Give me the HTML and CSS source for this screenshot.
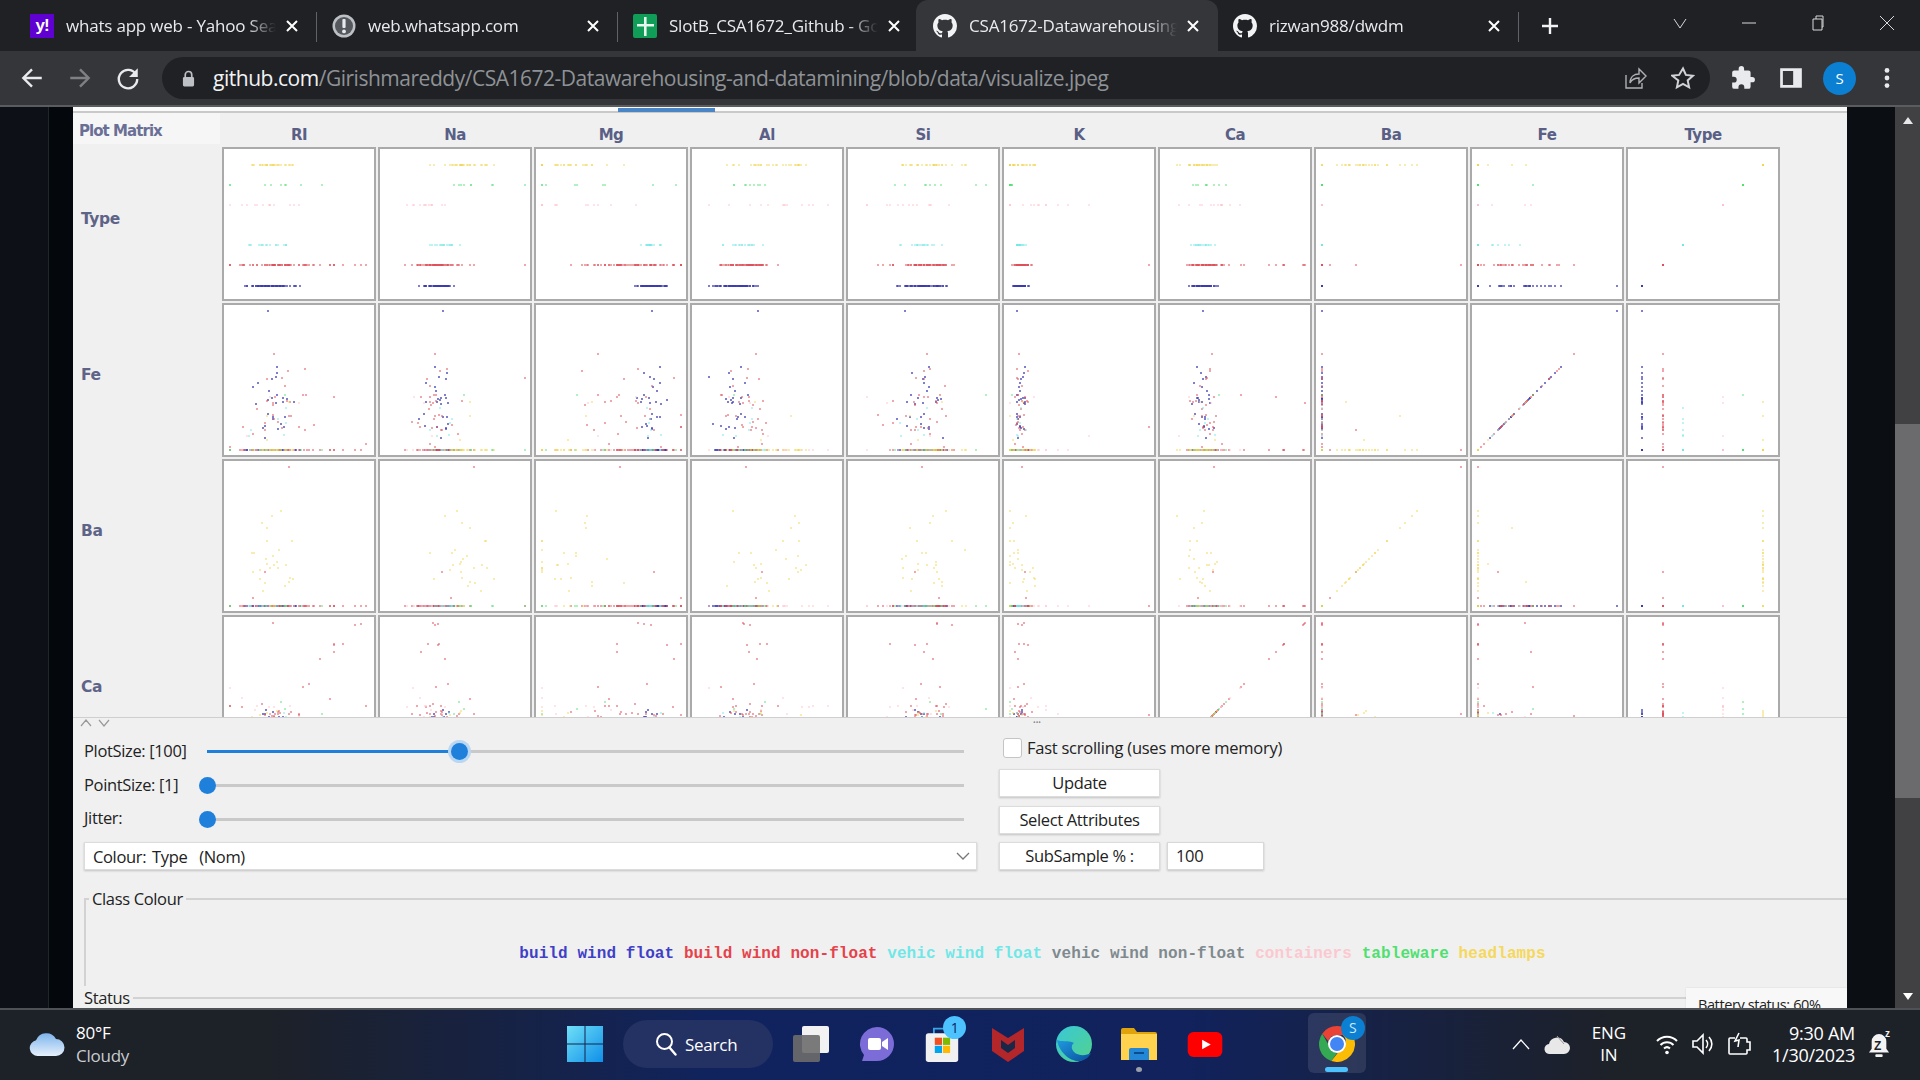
FILE: index.html
```html
<!DOCTYPE html>
<html lang="en">
<head>
<meta charset="utf-8">
<title>visualize.jpeg</title>
<link rel="stylesheet" href="styles.css">
</head>
<body>
<div class="tabbar">
  <div class="tab first">
    <span class="fav yahoo">y!</span><span class="tab-title">whats app web - Yahoo Search Results</span>
    <svg class="tab-x" viewBox="0 0 14 14"><path d="M2 2l10 10M12 2L2 12"/></svg>
  </div>
  <div class="tab">
    <svg class="fav" viewBox="0 0 24 24"><circle cx="12" cy="12" r="11.5" fill="#bdc1c6"/><circle cx="12" cy="12" r="9" fill="#55585c"/><rect x="10.4" y="5" width="3.2" height="9" rx="1" fill="#e8eaed"/><circle cx="12" cy="17.4" r="1.9" fill="#e8eaed"/></svg>
    <span class="tab-title">web.whatsapp.com</span>
    <svg class="tab-x" viewBox="0 0 14 14"><path d="M2 2l10 10M12 2L2 12"/></svg>
  </div>
  <div class="tab no-sep">
    <svg class="fav" viewBox="0 0 24 24"><rect width="24" height="24" rx="2" fill="#0f9d58"/><path d="M11 3h2.6v7H21v2.6h-7.4V22H11v-9.4H4V10h7z" fill="#e8f5ee"/></svg>
    <span class="tab-title">SlotB_CSA1672_Github - Google Sheets</span>
    <svg class="tab-x" viewBox="0 0 14 14"><path d="M2 2l10 10M12 2L2 12"/></svg>
  </div>
  <div class="tab active">
    <svg class="fav" viewBox="0 0 16 16"><path class="gh" d="M8 0C3.58 0 0 3.58 0 8c0 3.54 2.29 6.53 5.47 7.59.4.07.55-.17.55-.38 0-.19-.01-.82-.01-1.49-2.01.37-2.53-.49-2.69-.94-.09-.23-.48-.94-.82-1.13-.28-.15-.68-.52-.01-.53.63-.01 1.08.58 1.23.82.72 1.21 1.87.87 2.33.66.07-.52.28-.87.51-1.07-1.78-.2-3.64-.89-3.64-3.95 0-.87.31-1.59.82-2.15-.08-.2-.36-1.02.08-2.12 0 0 .67-.21 2.2.82.64-.18 1.32-.27 2-.27.68 0 1.36.09 2 .27 1.53-1.04 2.2-.82 2.2-.82.44 1.1.16 1.92.08 2.12.51.56.82 1.27.82 2.15 0 3.07-1.87 3.75-3.65 3.95.29.25.54.73.54 1.48 0 1.07-.01 1.93-.01 2.2 0 .21.15.46.55.38A8.013 8.013 0 0016 8c0-4.42-3.58-8-8-8z"/></svg>
    <span class="tab-title">CSA1672-Datawarehousing-and-datamining</span>
    <svg class="tab-x" viewBox="0 0 14 14"><path d="M2 2l10 10M12 2L2 12"/></svg>
  </div>
  <div class="tab">
    <svg class="fav" viewBox="0 0 16 16"><path class="gh" d="M8 0C3.58 0 0 3.58 0 8c0 3.54 2.29 6.53 5.47 7.59.4.07.55-.17.55-.38 0-.19-.01-.82-.01-1.49-2.01.37-2.53-.49-2.69-.94-.09-.23-.48-.94-.82-1.13-.28-.15-.68-.52-.01-.53.63-.01 1.08.58 1.23.82.72 1.21 1.87.87 2.33.66.07-.52.28-.87.51-1.07-1.78-.2-3.64-.89-3.64-3.95 0-.87.31-1.59.82-2.15-.08-.2-.36-1.02.08-2.12 0 0 .67-.21 2.2.82.64-.18 1.32-.27 2-.27.68 0 1.36.09 2 .27 1.53-1.04 2.2-.82 2.2-.82.44 1.1.16 1.92.08 2.12.51.56.82 1.27.82 2.15 0 3.07-1.87 3.75-3.65 3.95.29.25.54.73.54 1.48 0 1.07-.01 1.93-.01 2.2 0 .21.15.46.55.38A8.013 8.013 0 0016 8c0-4.42-3.58-8-8-8z"/></svg>
    <span class="tab-title">rizwan988/dwdm</span>
    <svg class="tab-x" viewBox="0 0 14 14"><path d="M2 2l10 10M12 2L2 12"/></svg>
  </div>
  <svg class="new-tab" viewBox="0 0 18 18"><path d="M9 1v16M1 9h16"/></svg>
  <div class="win-controls">
    <svg viewBox="0 0 16 16"><path d="M2 4l6 9 6-9"/></svg>
    <svg viewBox="0 0 16 16"><path d="M1 8h14"/></svg>
    <svg viewBox="0 0 16 16"><path d="M3 4h9v11H3zM6 4V1h7v11h-1"/></svg>
    <svg viewBox="0 0 16 16"><path d="M1 1l14 14M15 1L1 15"/></svg>
  </div>
</div>

<div class="toolbar">
  <div class="nav-btn"><svg viewBox="0 0 24 24"><path class="ic" d="M21 12H4M12 4l-8 8 8 8"/></svg></div>
  <div class="nav-btn dim"><svg viewBox="0 0 24 24"><path class="ic" d="M3 12h17M12 4l8 8-8 8"/></svg></div>
  <div class="nav-btn"><svg viewBox="0 0 24 24"><path class="ic" d="M19.5 9A8.5 8.5 0 1 0 20.5 13"/><path class="ic-fill" d="M21 3v8h-8z"/></svg></div>
  <div class="omnibox">
    <svg class="lock" viewBox="0 0 14 18"><path d="M3.5 8V5a3.5 3.5 0 0 1 7 0v3" fill="none" stroke="#bdc1c6" stroke-width="1.8"/><rect x="1" y="7.5" width="12" height="10" rx="1.5" fill="#bdc1c6"/></svg>
    <div class="url"><span class="host">github.com</span>/Girishmareddy/CSA1672-Datawarehousing-and-datamining/blob/data/visualize.jpeg</div>
    <svg class="omni-ic" viewBox="0 0 24 24"><path class="thin" d="M3 9v13h16v-5M7 17c0-6 4-9 9-9V3l7 7-7 7v-5c-4 0-7 1-9 5z"/></svg>
    <svg class="omni-ic" viewBox="0 0 24 24"><path class="thin2" d="M12 2.5l2.9 6.4 7 .8-5.2 4.7 1.4 6.9-6.100-3.500-6.100 3.500 1.400-6.900L1.100 9.700l7-.8z"/></svg>
  </div>
  <div class="tool-ic puzzle"><svg viewBox="0 0 24 24"><path d="M20.500 11H19V7a2 2 0 0 0-2-2h-4V3.500a2.500 2.500 0 0 0-5 0V5H4a2 2 0 0 0-2 2v3.800h1.500a2.700 2.700 0 0 1 0 5.400H2V20a2 2 0 0 0 2 2h3.800v-1.500a2.700 2.700 0 0 1 5.400 0V22H17a2 2 0 0 0 2-2v-4h1.500a2.500 2.500 0 0 0 0-5z" fill="#e8eaed"/></svg></div>
  <div class="tool-ic panel-ic"><svg viewBox="0 0 24 24"><path fill-rule="evenodd" d="M2 3h20v18H2zM4.500 5.500v13H14v-13z" fill="#e8eaed"/></svg></div>
  <div class="avatar">S</div>
  <div class="tool-ic"><svg viewBox="0 0 24 24"><circle cx="12" cy="5" r="2.200" fill="#e8eaed"/><circle cx="12" cy="12" r="2.200" fill="#e8eaed"/><circle cx="12" cy="19" r="2.200" fill="#e8eaed"/></svg></div>
</div>

<main class="content">
  <div class="gutter-left"></div>
  <div class="shot">
    <div class="tabline"><span class="tabline-active"></span></div>
    <section class="matrix-area">
      <div class="matrix" id="matrix">
        <div class="corner">Plot Matrix</div>
        <div class="col-label">RI</div><div class="col-label">Na</div><div class="col-label">Mg</div><div class="col-label">Al</div><div class="col-label">Si</div><div class="col-label">K</div><div class="col-label">Ca</div><div class="col-label">Ba</div><div class="col-label">Fe</div><div class="col-label">Type</div>
      </div>
    </section>
    <section class="panel">
      <div class="grips"><span class="arrows">
        <svg viewBox="0 0 32 8"><path d="M1 7l5-6 5 6M19 1l5 6 5-6"/></svg></span><span class="dots">•••</span></div>
      <div class="controls">
        <div class="left-col">
          <div class="slider-row"><label>PlotSize: [100]</label><div class="slider"><div class="fill" style="width:33.300%"></div><div class="thumb halo" style="left:33.300%"></div></div></div>
          <div class="slider-row"><label>PointSize: [1]</label><div class="slider"><div class="thumb"></div></div></div>
          <div class="slider-row"><label>Jitter:</label><div class="slider"><div class="thumb"></div></div></div>
          <div class="combo"><span>Colour: Type  (Nom)</span><svg viewBox="0 0 14 8"><path d="M1 1l6 6 6-6"/></svg></div>
        </div>
        <div class="right-col">
          <div class="check-row"><span class="check"></span><span class="check-text">Fast scrolling (uses more memory)</span></div>
          <div class="btn">Update</div>
          <div class="btn">Select Attributes</div>
          <div class="sub-row"><div class="btn">SubSample % :</div><div class="input">100</div></div>
        </div>
      </div>
      <fieldset class="group class-colour">
        <legend>Class Colour</legend>
        <div class="legend-line"><span class="c1">build wind float</span> <span class="c2">build wind non-float</span> <span class="c3">vehic wind float</span> <span class="c4">vehic wind non-float</span> <span class="c5">containers</span> <span class="c6">tableware</span> <span class="c7">headlamps</span></div>
      </fieldset>
      <fieldset class="group status"><legend>Status</legend></fieldset>
      <div class="toast">Battery status: 60%</div>
    </section>
  </div>
  <div class="gutter-right"></div>
  <div class="scrollbar">
    <span class="arrow-up"></span>
    <span class="sb-thumb"></span>
    <span class="arrow-down"></span>
  </div>
</main>

<footer class="taskbar">
  <div class="weather">
    <svg class="cloud" viewBox="0 0 36 24"><defs><linearGradient id="cl" x1="0" y1="0" x2="0" y2="1"><stop offset="0" stop-color="#7db4ec"/><stop offset="1" stop-color="#e6f0fb"/></linearGradient></defs><path d="M9 24a8 8 0 0 1-2-15.800A11 11 0 0 1 27 7a8.500 8.500 0 0 1 0 17z" fill="url(#cl)"/></svg>
    <div class="weather-text"><span class="temp">80°F</span><span class="cond">Cloudy</span></div>
  </div>
  <svg class="win-logo" viewBox="0 0 36 36"><defs><linearGradient id="w1" x1="0" y1="0" x2="1" y2="1"><stop offset="0" stop-color="#6fe0f7"/><stop offset="1" stop-color="#0f8fe8"/></linearGradient></defs><path d="M0 0h17.500v17.500H0zM18.500 0H36v17.500H18.500zM0 18.500h17.500V36H0zM18.500 18.500H36V36H18.500z" fill="url(#w1)"/></svg>
  <div class="search-pill">
    <svg viewBox="0 0 22 24"><circle cx="9.500" cy="9.500" r="7.500" fill="none" stroke="#fff" stroke-width="2"/><path d="M14.500 15.500l6 7" stroke="#fff" stroke-width="2.400" stroke-linecap="round"/></svg>
    <span>Search</span>
  </div>
  <div class="apps">
    <svg class="app" viewBox="0 0 36 36"><rect x="9" y="0" width="27" height="27" rx="2" fill="#f2f2f2"/><rect x="0" y="9" width="27" height="27" rx="2" fill="#6d6d6d" fill-opacity=".9"/></svg>
    <svg class="app" viewBox="0 0 36 36"><path d="M18 1a17 17 0 0 1 0 34H3l2-6A17 17 0 0 1 18 1z" fill="#7b6cd8"/><rect x="9" y="12" width="13" height="12" rx="2" fill="#fff"/><path d="M23 16l6-4v12l-6-4z" fill="#fff"/></svg>
    <div class="store-wrap">
      <svg class="app" viewBox="0 0 36 40"><path d="M9 10V3h18v7" fill="none" stroke="#37a6e8" stroke-width="2"/><rect x="0" y="8" width="36" height="32" rx="3" fill="#f1f1f1"/><rect x="10" y="13" width="8" height="8" fill="#f25022"/><rect x="19" y="13" width="8" height="8" fill="#7fba00"/><rect x="10" y="22" width="8" height="8" fill="#00a4ef"/><rect x="19" y="22" width="8" height="8" fill="#ffb900"/></svg>
      <span class="badge">1</span>
    </div>
    <svg class="app" viewBox="0 0 36 36"><path d="M2 2l16 10L34 2v23L18 36 2 25z" fill="#b3262a"/><path d="M11 14l7 5 7-5v8l-7 5-7-5z" fill="#1a2748"/></svg>
    <svg class="app" viewBox="0 0 36 36"><defs><linearGradient id="e1" x1="0" y1="0" x2="1" y2="1"><stop offset="0" stop-color="#39c8d8"/><stop offset="1" stop-color="#52d28c"/></linearGradient><linearGradient id="e2" x1="0" y1="0" x2="1" y2="1"><stop offset="0" stop-color="#1f9be0"/><stop offset="1" stop-color="#0a4f9e"/></linearGradient></defs><circle cx="18" cy="18" r="18" fill="url(#e1)"/><path d="M1 14C3 26 14 36 24 35c6-1 9-4 11-8-5 3-13 3-17-1-3-3-3-7 0-9-6-3-13-1-17-3z" fill="url(#e2)"/></svg>
    <div class="explorer-wrap">
      <svg class="app" viewBox="0 0 36 32"><path d="M0 2a2 2 0 0 1 2-2h11l3 4h18a2 2 0 0 1 2 2v4H0z" fill="#e0a30b"/><rect x="0" y="6" width="36" height="26" fill="#ffd34e"/><path d="M10 20h16a2 2 0 0 1 2 2v10H8V22a2 2 0 0 1 2-2z" fill="#2187d6"/><rect x="13" y="24" width="10" height="2" fill="#0b4d8c"/></svg>
      <span class="open-dot"></span>
    </div>
    <svg class="app yt" viewBox="0 0 36 26"><rect width="36" height="26" rx="6" fill="#f00"/><path d="M15 8l9 5-9 5z" fill="#fff"/></svg>
    <div class="chrome-slot">
      <div class="chrome-wrap">
        <svg class="app" viewBox="0 0 36 36"><path d="M18 0a18 18 0 0 1 15.600 9H18a9 9 0 0 0-8.600 6.300L3.200 7.700A18 18 0 0 1 18 0z" fill="#ea4335"/><path d="M3.200 7.700l7.800 13.500a9 9 0 0 0 7 5.800l-5.600 8.100A18 18 0 0 1 3.200 7.700z" fill="#34a853"/><path d="M33.600 9A18 18 0 0 1 12.400 35.100L21 24a9 9 0 0 0 3-15z" fill="#fbbc05"/><circle cx="18" cy="18" r="9" fill="#fff"/><circle cx="18" cy="18" r="7" fill="#4285f4"/></svg>
        <span class="chrome-badge">S</span>
      </div>
      <span class="active-bar"></span>
    </div>
  </div>
  <div class="tray">
    <svg class="t-caret" viewBox="0 0 20 12"><path d="M2 11l8-9 8 9"/></svg>
    <svg class="t-cloud" viewBox="0 0 26 22"><path d="M6 21a5 5 0 0 1-1-10A8 8 0 0 1 20 9a6 6 0 0 1 0 12z" fill="#e8e8e8"/><path d="M13 3l7 8" stroke="#999" stroke-width="1"/></svg>
    <div class="t-lang"><span>ENG</span><span>IN</span></div>
    <svg class="t-ic" viewBox="0 0 24 24"><path d="M2 9a14 14 0 0 1 20 0M5.500 13a9 9 0 0 1 13 0M9 16.500a4.500 4.500 0 0 1 6 0" fill="none" stroke="#fff" stroke-width="2"/><circle cx="12" cy="20.500" r="1.800" fill="#fff"/></svg>
    <svg class="t-ic" viewBox="0 0 24 24"><path d="M2 9h4l6-6v18l-6-6H2z" fill="none" stroke="#fff" stroke-width="1.600"/><path d="M15 8a6 6 0 0 1 0 8M18 5a10 10 0 0 1 0 14" fill="none" stroke="#fff" stroke-width="1.600"/></svg>
    <svg class="t-ic" viewBox="0 0 24 24"><path d="M8 6H3a1 1 0 0 0-1 1v14a1 1 0 0 0 1 1h16a1 1 0 0 0 1-1v-3h3v-8h-3V7a1 1 0 0 0-1-1h-6" fill="none" stroke="#fff" stroke-width="1.600"/><path d="M12 1L8 9l4-1-1 7" fill="none" stroke="#fff" stroke-width="1.600"/></svg>
    <div class="clock"><span>9:30 AM</span><span>1/30/2023</span></div>
    <div class="bell-wrap">
      <svg class="bell" viewBox="0 0 24 28"><path d="M12 1a8 8 0 0 1 8 8v8l3 4H1l3-4V9a8 8 0 0 1 8-8z" fill="#f3f3f3"/><rect x="8" y="23" width="8" height="3" rx="1" fill="#f3f3f3"/></svg>
      <span class="zz">Z</span><span class="zz small">z</span>
    </div>
  </div>
</footer>
<script src="script.js"></script>
</body>
</html>
```
FILE: styles.css
```css
* { box-sizing: border-box; }
html, body { margin: 0; height: 100%; }
body {
  width: 1920px; height: 1080px; overflow: hidden;
  display: flex; flex-direction: column;
  background: #0d1117; color: #fff;
  font-family: "Open Sans", "Noto Sans", sans-serif;
}

/* tab strip */
.tabbar { height: 51px; flex: none; display: flex; align-items: stretch; padding-left: 15px; background: #202124; }
.tab { width: 301px; flex: none; display: flex; align-items: center; padding: 0 15px; position: relative; color: #e8eaed; }
.tab.first { width: 302px; }
.tab::after { content: ""; position: absolute; right: 0; top: 12px; height: 30px; width: 1px; background: #5f6368; }
.tab.no-sep { margin-right: -3px; }
.tab.no-sep::after, .tab.active::after { display: none; }
.tab.active { background: #35363a; border-radius: 12px 12px 0 0; width: 302px; padding-left: 17px; }
.fav { width: 24px; height: 24px; flex: none; }
.gh { fill: #f1f3f4; }
.yahoo { background: #5f01d1; color: #fff; font: 700 17px/24px "Liberation Sans", sans-serif; text-align: center; letter-spacing: -1px; }
.tab-title {
  flex: 1; min-width: 0; margin: 0 9px 0 12px; white-space: nowrap; overflow: hidden;
  font-size: 17px; letter-spacing: -.2px;
  -webkit-mask-image: linear-gradient(90deg, #000 86%, transparent 100%);
  mask-image: linear-gradient(90deg, #000 86%, transparent 100%);
}
.tab-x { width: 14px; height: 14px; flex: none; margin-right: 3px; }
.tab-x path { fill: none; stroke: #fff; stroke-width: 2; }
.new-tab { width: 18px; height: 18px; align-self: center; margin-left: 22px; }
.new-tab path { stroke: #f1f3f4; stroke-width: 2.400; fill: none; }
.win-controls { margin-left: 113px; display: flex; align-items: center; gap: 53px; margin-top: -6px; }
.win-controls svg { width: 16px; height: 16px; }
.win-controls path { fill: none; stroke: #d8d9da; stroke-width: 1; }

/* toolbar */
.toolbar { height: 54px; flex: none; display: flex; align-items: center; padding-left: 8px; background: #35363a; }
.nav-btn { width: 48px; flex: none; display: flex; justify-content: center; }
.nav-btn svg { width: 26px; height: 26px; }
.ic { fill: none; stroke: #e8eaed; stroke-width: 2.200; }
.ic-fill { fill: #e8eaed; }
.dim .ic { stroke: #7d8084; }
.omnibox { width: 1548px; height: 42px; margin-left: 10px; flex: none; display: flex; align-items: center; background: #202124; border-radius: 21px; padding: 0 15px 0 20px; color: #9aa0a6; }
.lock { width: 13px; height: 17px; flex: none; }
.url { flex: 1; margin-left: 18px; font-size: 21px; letter-spacing: -.48px; white-space: nowrap; overflow: hidden; color: #8e9297; }
.host { color: #f1f3f4; }
.omni-ic { width: 24px; height: 26px; flex: none; margin-left: 24px; }
.thin { fill: none; stroke: #aeb1b5; stroke-width: 1.400; }
.thin2 { fill: none; stroke: #d0d2d5; stroke-width: 2; }
.tool-ic { width: 26px; height: 26px; flex: none; margin-left: 22px; }
.puzzle { margin-left: 20px; }
.tool-ic svg { width: 26px; height: 26px; display: block; }
.avatar { width: 33px; height: 33px; flex: none; margin-left: 19px; border-radius: 50%; background: #0b7fd1; color: #fff; font-size: 15px; line-height: 33px; text-align: center; }
.avatar + .tool-ic { margin-left: 18px; }

/* page */
.content { flex: 1; min-height: 0; display: flex; border-top: 2px solid #5b5c5e; }
.gutter-left { width: 73px; flex: none; background: linear-gradient(90deg, #0d1117 48px, #21262d 48px, #21262d 49px, #04070c 49px); }
.gutter-right { width: 48px; flex: none; background: #0b0e13; }
.shot { flex: 1; min-width: 0; background: #f0f0f0; color: #222; display: flex; flex-direction: column; overflow: hidden; filter: blur(.55px); position: relative; font-size: 16.500px; letter-spacing: -.35px; }
.tabline { height: 6px; flex: none; background: #fafafa; border-bottom: 2px solid #c9c9c9; padding-left: 545px; }
.tabline-active { display: block; width: 97px; height: 4px; margin-top: 1px; background: #4a86c6; }
.scrollbar { width: 25px; flex: none; background: #414144; display: flex; flex-direction: column; align-items: center; padding-top: 10px; }
.sb-thumb { width: 25px; height: 374px; margin-top: 300px; background: #6b6b6d; }
.arrow-up { width: 0; height: 0; border: 5px solid transparent; border-top: 0; border-bottom: 7px solid #e8e8e8; }
.arrow-down { width: 0; height: 0; border: 5px solid transparent; border-bottom: 0; border-top: 7px solid #fff; margin-top: auto; margin-bottom: 8px; }

/* matrix */
.matrix-area { height: 605px; flex: none; overflow: hidden; border-bottom: 1px solid #cfcfcf; }
.matrix { display: grid; grid-template-columns: 147px repeat(10, 154px); grid-template-rows: 32px repeat(4, 154px); column-gap: 2px; row-gap: 2px; }
.corner { background: #f6f6f6; padding: 8px 0 0 6px; height: 31px; font: 700 15px/20px "DejaVu Sans", sans-serif; letter-spacing: -.95px; color: #6a6f96; }
.col-label { font: 700 15px/20px "DejaVu Sans", sans-serif; letter-spacing: -.5px; color: #5a5f86; text-align: center; padding-top: 12px; }
.row-label { font: 700 15.500px/20px "DejaVu Sans", sans-serif; letter-spacing: -.4px; color: #5e6388; display: flex; align-items: center; padding: 0 0 10px 8px; }
.cell { background: #fff; border: 2px solid #aaa; overflow: hidden; }
.cell canvas { display: block; width: 100%; height: 100%; filter: blur(.5px); }

/* controls */
.panel { flex: 1; min-height: 0; position: relative; overflow: hidden; }
.grips { height: 10px; display: flex; align-items: center; padding-left: 7px; }
.arrows svg { display: block; width: 32px; height: 8px; }
.arrows path { fill: none; stroke: #999; stroke-width: 1.200; }
.dots { margin-left: 921px; font-size: 7px; line-height: 10px; color: #888; letter-spacing: 0; }
.controls { display: flex; padding: 0 0 0 11px; gap: 22px; height: 142px; }
.left-col { width: 893px; flex: none; padding-top: 7px; }
.slider-row { height: 33.700px; display: flex; align-items: center; }
.slider-row label { width: 123px; flex: none; white-space: nowrap; padding-bottom: 3px; }
.slider { width: 757px; height: 3px; flex: none; background: #c9c9c9; position: relative; }
.fill { height: 3px; background: #1f80dc; }
.thumb { position: absolute; top: -7px; left: 0; margin-left: -8.500px; width: 17px; height: 17px; border-radius: 50%; background: #1f80dc; }
.thumb.halo { box-shadow: 0 0 0 3px #b9d7f2; }
.combo { height: 28px; margin-top: 6px; background: #fff; border: 1px solid #dcdcdc; box-shadow: 0 1px 2px rgba(0,0,0,.2); display: flex; align-items: center; justify-content: space-between; padding: 0 6px 0 8px; white-space: pre; word-spacing: 2px; }
.combo svg { width: 14px; height: 8px; }
.combo path { fill: none; stroke: #777; stroke-width: 1.300; }
.right-col { width: 290px; flex: none; display: flex; flex-direction: column; padding-top: 10px; }
.check-row { display: flex; align-items: center; height: 20px; margin: 0 0 11px 4px; gap: 5px; white-space: nowrap; }
.check-text { letter-spacing: -.25px; padding-bottom: 1px; }
.check { width: 19px; height: 20px; background: #fff; border: 1px solid #c4c4c4; border-radius: 3px; }
.btn { width: 161px; height: 28px; margin-bottom: 8.500px; background: #fff; border: 1px solid #dcdcdc; box-shadow: 0 1px 2px rgba(0,0,0,.2); text-align: center; line-height: 26px; }
.sub-row { display: flex; gap: 7px; }
.input { width: 97px; height: 28px; background: #fff; border: 1px solid #d8d8d8; box-shadow: 0 1px 2px rgba(0,0,0,.18); padding-left: 8px; line-height: 26px; }

.group { margin: 0 0 0 11px; padding: 0; border: 0 solid #d2d2d2; border-width: 2px 0 0 2px; min-width: 0; }
.group legend { margin-left: 3px; padding: 0 3px; line-height: 20px; }
.class-colour { height: 97px; margin-top: 19px; }
.legend-line { font: 700 16px/20px "Liberation Mono", monospace; letter-spacing: .08px; text-align: center; white-space: pre; padding: 35px 0 0 0; margin-left: 132px; }
.c1 { color: #3f3fc8; } .c2 { color: #e5424a; } .c3 { color: #70e7e7; } .c4 { color: #7f8a8f; } .c5 { color: #fcc8d0; } .c6 { color: #4fe070; } .c7 { color: #f5d85c; }
.status { margin-top: 2px; border-left: 0; }
.status legend { margin-left: -3px; }
.toast { position: absolute; right: 0; bottom: 0; width: 161px; height: 20px; background: #f8f8f8; padding: 7px 0 0 12px; font-size: 14.500px; line-height: 20px; white-space: nowrap; letter-spacing: -.4px; overflow: hidden; box-shadow: 0 0 2px rgba(0,0,0,.1); }

/* taskbar */
.taskbar { height: 72px; flex: none; display: flex; align-items: center; padding: 0 28px 2px 29px; border-top: 2px solid #4e5156; background: linear-gradient(90deg, #1d2128 0, #1d2128 14%, #10235f 38%, #11225c 62%, #1d2128 84%); }
.weather { width: 538px; flex: none; display: flex; align-items: center; gap: 11px; padding-bottom: 1px; }
.cloud { width: 36px; height: 24px; }
.weather-text { display: flex; flex-direction: column; line-height: 23px; font-size: 17px; letter-spacing: -.25px; }
.cond { color: #c9ccd0; }
.win-logo { width: 36px; height: 36px; flex: none; }
.search-pill { width: 150px; height: 48px; flex: none; margin: 0 20px; border-radius: 24px; background: #243263; display: flex; align-items: center; gap: 8px; padding-left: 32px; font-size: 17px; letter-spacing: -.25px; }
.search-pill svg { width: 22px; height: 24px; }
.apps { display: flex; align-items: center; gap: 29.700px; flex: none; }
.app { width: 36px; height: 36px; display: block; flex: none; }
.store-wrap, .explorer-wrap, .chrome-wrap, .chrome-slot { position: relative; width: 36px; height: 36px; flex: none; }
.badge { position: absolute; top: -10px; right: -6px; width: 23px; height: 23px; border-radius: 50%; background: #4cc2ff; color: #10235f; font-size: 14px; line-height: 23px; text-align: center; }
.open-dot { position: absolute; left: 15px; bottom: -10px; width: 6px; height: 5px; border-radius: 50%; background: #9aa0aa; }
.yt { height: 25px; }
.chrome-slot { margin-left: 66px; }
.chrome-slot::before { content: ""; position: absolute; left: -11px; top: -13px; width: 58px; height: 60px; border-radius: 6px; background: rgba(255,255,255,.1); }
.chrome-badge { position: absolute; top: -10px; right: -10px; width: 24px; height: 24px; border-radius: 50%; background: #0b7fd1; color: #cfe8fb; font-size: 14px; line-height: 24px; text-align: center; }
.active-bar { position: absolute; left: 6px; top: 41px; width: 23px; height: 5px; border-radius: 3px; background: #4cc2ff; }
.tray { flex: 1; margin-left: 156px; display: flex; align-items: center; }
.t-caret { width: 20px; height: 12px; flex: none; }
.t-caret path { fill: none; stroke: #fff; stroke-width: 1.300; }
.t-cloud { width: 26px; height: 22px; flex: none; margin-left: 13px; }
.t-lang { width: 50px; flex: none; margin: 0 21px 0 14px; display: flex; flex-direction: column; align-items: center; font-size: 17px; line-height: 22.500px; letter-spacing: -.2px; }
.t-ic { width: 24px; height: 24px; flex: none; margin-right: 12px; }
.clock { flex: 1; display: flex; flex-direction: column; align-items: flex-end; font-size: 18px; line-height: 22.500px; letter-spacing: -.25px; margin-right: 13px; white-space: nowrap; }
.bell-wrap { width: 24px; height: 30px; position: relative; flex: none; }
.bell { width: 22px; height: 26px; display: block; margin-top: 4px; }
.zz { position: absolute; left: 6px; top: 10px; font: 700 12px/14px "Liberation Sans", sans-serif; color: #1d2128; }
.zz.small { left: 17px; top: 0; font-size: 10px; line-height: 10px; color: #f3f3f3; }
```
FILE: script.js
```javascript
(function () {
  var COLORS = ['#3a3ab4', '#e0505a', '#70e6e6', '#808080', '#ffc0c8', '#50e070', '#f2d450'];
  var ALPHA = [.65, .5, .45, .45, .45, .45, .45];
  var COUNTS = [70, 76, 17, 0, 13, 9, 29];
  /* mean / spread per class, for each normalised attribute */
  var STATS = {
    RI: [[.3, .08], [.33, .16], [.29, .08], [0, 0], [.38, .22], [.3, .2], [.3, .12]],
    Na: [[.38, .06], [.36, .09], [.41, .06], [0, 0], [.32, .1], [.59, .15], [.55, .1]],
    Mg: [[.79, .05], [.68, .2], [.79, .04], [0, 0], [.17, .2], [.29, .3], [.12, .18]],
    Al: [[.27, .08], [.35, .1], [.28, .08], [0, 0], [.54, .2], [.34, .1], [.57, .18]],
    Si: [[.5, .09], [.5, .12], [.46, .09], [0, 0], [.46, .2], [.6, .18], [.56, .12]],
    K:  [[.07, .025], [.085, .03], [.065, .02], [0, 0], [.15, .25], [.005, .005], [.05, .08]],
    Ca: [[.27, .04], [.29, .07], [.27, .05], [0, 0], [.36, .14], [.3, .07], [.25, .07]]
  };
  var seed = 20230130;
  function rnd() { seed = (seed * 1664525 + 1013904223) >>> 0; return seed / 4294967296; }
  function norm(m, s) {
    var v = m + s * (Math.sqrt(-2 * Math.log(rnd() + 1e-9)) * Math.cos(6.2832 * rnd()));
    return Math.min(1, Math.max(0, v));
  }
  var data = [];
  COUNTS.forEach(function (n, c) {
    for (var i = 0; i < n; i++) {
      var p = { cls: c, Type: .09 + c * .135 };
      Object.keys(STATS).forEach(function (k) { p[k] = norm(STATS[k][c][0], STATS[k][c][1]); });
      if (c === 1 && rnd() < .08) { p.Ca = .4 + rnd() * .6; p.RI = Math.min(1, p.Ca * .85 + rnd() * .1); }
      p.Ba = c === 6 ? (rnd() < .85 ? norm(.32, .18) : 0) : (rnd() < .02 ? rnd() * .3 : 0);
      p.Fe = c < 3 ? (rnd() < .55 ? 0 : norm(.26, .17)) : (rnd() < .1 ? rnd() * .5 : 0);
      data.push(p);
    }
  });
  data[5].Fe = 1; data[5].K = .047; data[80].Ba = 1; data[90].K = 1; data[100].RI = .98; data[110].Na = 1; data[120].Ca = 1;
  function pos(k, v) { return k === 'Type' ? v : .035 + .93 * v; }

  var columns = ['RI', 'Na', 'Mg', 'Al', 'Si', 'K', 'Ca', 'Ba', 'Fe', 'Type'];
  var rows = ['Type', 'Fe', 'Ba', 'Ca'];
  var matrix = document.getElementById('matrix');
  rows.forEach(function (r) {
    var label = document.createElement('div');
    label.className = 'row-label';
    label.textContent = r;
    matrix.appendChild(label);
    columns.forEach(function (col) {
      var cell = document.createElement('div');
      cell.className = 'cell';
      var cv = document.createElement('canvas');
      cv.width = 150; cv.height = 150;
      var ctx = cv.getContext('2d');
      data.forEach(function (p) {
        ctx.fillStyle = COLORS[p.cls];
        ctx.globalAlpha = ALPHA[p.cls];
        ctx.fillRect(Math.round(pos(col, p[col]) * 149), Math.round((1 - pos(r, p[r])) * 149), 2, 2);
      });
      cell.appendChild(cv);
      matrix.appendChild(cell);
    });
  });
})();
```
